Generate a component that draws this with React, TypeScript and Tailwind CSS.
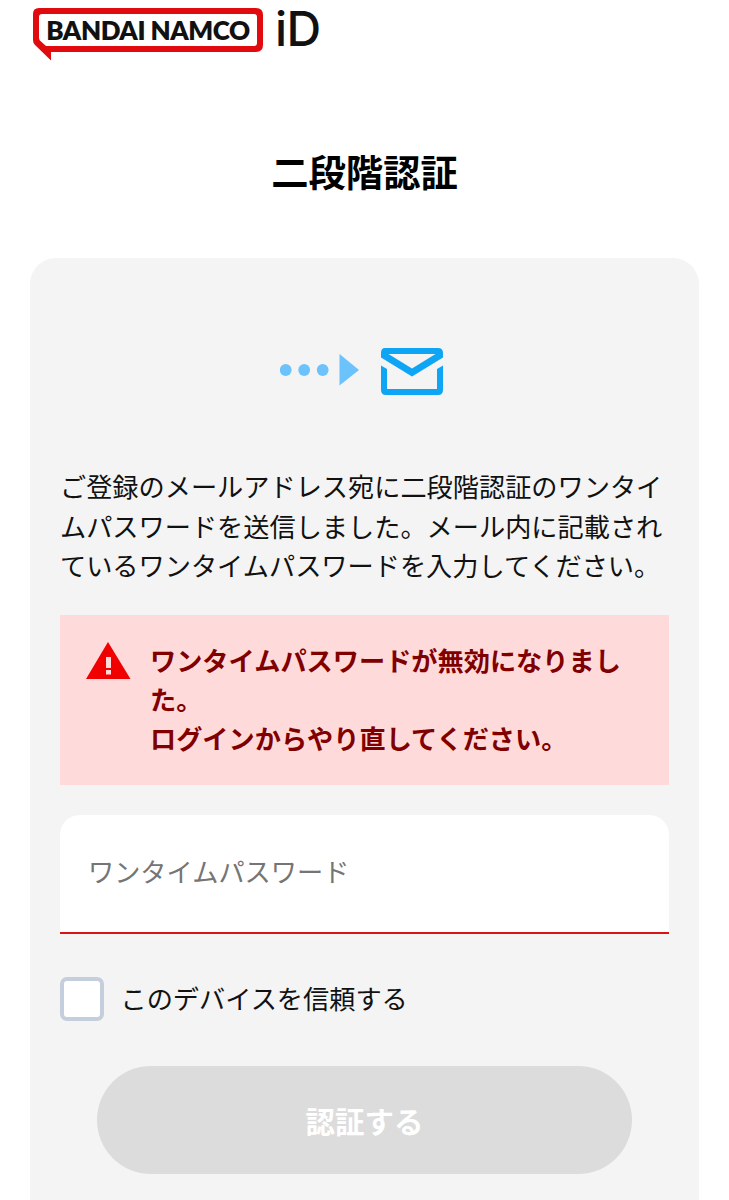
import React from "react";

const jp = "font-['Noto_Sans_CJK_JP','Noto_Sans',sans-serif]";

function Logo() {
  return (
    <div className="flex items-start pl-[33px] pt-[8px] h-[60px]">
      <div className="relative flex items-center justify-center w-[230px] h-[44px]">
        <svg className="absolute left-0 top-0" width="230" height="53" viewBox="0 0 230 53">
          <path
            fillRule="evenodd"
            d="M6 0 H223 Q230 0 230 7 V37 Q230 44 223 44 H18 V52.5 L2 37 Q0 35 0 32 V6 Q0 0 6 0 Z M9 6 Q6 6 6 9 V30 Q6 32 8 33.5 L13 38 H221 Q224 38 224 35 V9 Q224 6 221 6 Z"
            fill="#e00a0f"
          />
        </svg>
        <span className="relative font-['Lato',sans-serif] font-extrabold text-[26px] leading-none tracking-[-0.45px] text-[#111] whitespace-nowrap">
          BANDAI NAMCO
        </span>
      </div>
      <span className="ml-[12px] mt-[-6px] font-['Inter',sans-serif] font-medium text-[48px] leading-[54px] tracking-[-0.6px] text-[#111]">
        iD
      </span>
    </div>
  );
}

function MailIcon() {
  return (
    <div className="flex items-center justify-center h-[48px] pr-[5px] pt-[2px]">
      <svg width="164" height="48" viewBox="0 0 164 48">
        <g fill="#6cc2fb">
          <circle cx="5.7" cy="22" r="5.9" />
          <circle cx="24.2" cy="22" r="5.9" />
          <circle cx="42.7" cy="22" r="5.9" />
          <path d="M59.5 6 L79 22 L59.5 37.5 Z" />
        </g>
        <path
          fillRule="evenodd"
          d="M105 0 H158 Q163 0 163 5 V9.5 L132 28.5 L101 9.5 V5 Q101 0 105 0 Z M108.5 6 L132 20.5 L155.5 6 Z"
          fill="#0ea5f5"
        />
        <path
          d="M101 17.5 L107 21 L107 41 H157 V21 L163 17.5 V42 Q163 47 158 47 H106 Q101 47 101 42 Z"
          fill="#0ea5f5"
        />
      </svg>
    </div>
  );
}

function WarnIcon() {
  return (
    <svg className="shrink-0" width="46" height="37" viewBox="0 0 46 37">
      <path d="M22 0 L44.5 37 H0 Z" fill="#f00000" />
      <rect x="20" y="15" width="5" height="11" fill="#ffdada" />
      <rect x="20" y="28" width="5" height="4.5" fill="#ffdada" />
    </svg>
  );
}

export default function App() {
  return (
    <div className={`h-[1200px] overflow-hidden bg-white ${jp}`}>
      <Logo />
      <h1 className="mt-[84px] text-center text-[37.3px] leading-[54px] font-bold text-black">二段階認証</h1>

      <div className="mt-[60px] mx-[30px] h-[1000px] rounded-[26px] bg-[#f4f4f4] px-[30px] pt-[89px]">
        <MailIcon />

        <p className="mt-[72px] text-[26.2px] leading-[39.6px] text-[#111] break-all">
          ご登録のメールアドレス宛に二段階認証のワンタイムパスワードを送信しました。メール内に記載されているワンタイムパスワードを入力してください。
        </p>

        <div className="mt-[29px] h-[170px] bg-[#ffdada] flex items-start pl-[26px] pr-[30px] pt-[26px]">
          <div className="mt-[1px]">
            <WarnIcon />
          </div>
          <p className="ml-[18px] text-[26.2px] leading-[39px] font-bold text-[#800000]">
            ワンタイムパスワードが無効になりました。
            <br />
            ログインからやり直してください。
          </p>
        </div>

        <div className="mt-[30px] h-[119px] rounded-t-[20px] bg-white border-b-2 border-[#d91414] flex items-center pl-[28px] pb-[4px]">
          <span className="text-[26.2px] text-[#757575]">ワンタイムパスワード</span>
        </div>

        <div className="mt-[43px] flex items-center">
          <div className="w-[44px] h-[44px] rounded-[7px] border-[4px] border-[#c5cedd] bg-white" />
          <span className="ml-[16.5px] text-[26.2px] text-[#111]">このデバイスを信頼する</span>
        </div>

        <div className="mt-[45px] mx-[37px] h-[108px] rounded-[54px] bg-[#dcdcdc] flex items-center justify-center pt-[1px]">
          <span className="text-[29.5px] font-bold text-white">認証する</span>
        </div>
      </div>
    </div>
  );
}
